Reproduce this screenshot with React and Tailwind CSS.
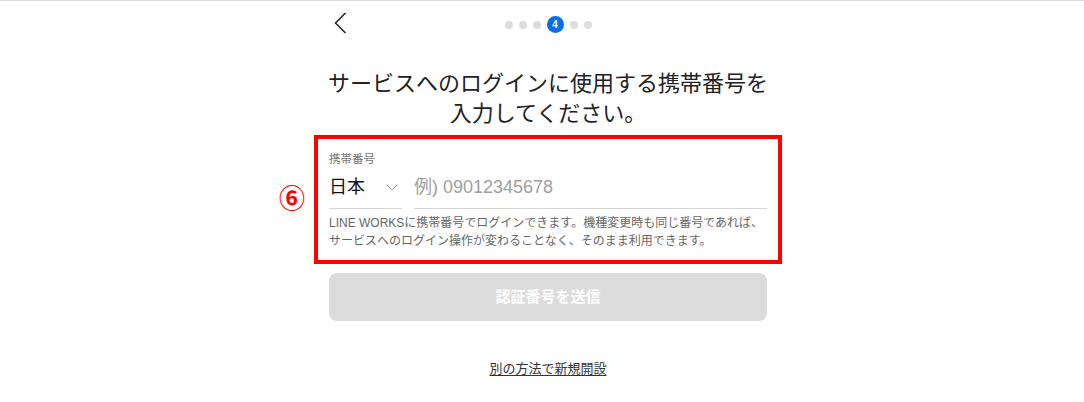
import React from 'react';

const dots = [1, 2, 3, 4, 5, 6];

function StepDots({ current }) {
  return (
    <div className="flex h-[17px] items-center gap-[6px]">
      {dots.map((n) =>
        n === current ? (
          <div
            key={n}
            className="flex h-[17px] w-[17px] items-center justify-center rounded-full bg-[#0b6cf2] text-[10px] font-bold leading-none text-white"
          >
            {n}
          </div>
        ) : (
          <div key={n} className="h-[8px] w-[8px] rounded-full bg-[#dddddd]" />
        )
      )}
    </div>
  );
}

export default function App() {
  return (
    <div className="min-h-[402px] border-t border-[#dcdcdc] bg-white pl-3 font-['Liberation_Sans','Noto_Sans_CJK_JP',sans-serif] text-[#222]">
      <div className="mx-auto w-[438px]">
        {/* Header */}
        <div className="grid h-[44px] grid-cols-[1fr_auto_1fr] items-start">
          <button className="mt-[11px] ml-[5px] w-fit">
            <svg width="13" height="22" viewBox="0 0 13 22" fill="none">
              <path d="M11.5 1 1.5 11l10 10" stroke="#222" strokeWidth="1.5" />
            </svg>
          </button>
          <div className="mt-[15px]">
            <StepDots current={4} />
          </div>
          <div />
        </div>

        {/* Title */}
        <h1 className="-mx-[20px] mt-[24px] text-center text-[22px] leading-[30px] font-normal whitespace-nowrap text-[#222]">
          サービスへのログインに使用する携帯番号を
          <br />
          入力してください。
        </h1>

        {/* Phone form (annotated) */}
        <div className="relative -mx-[15px] mt-[6px] border-4 border-[#ff0000] px-[11px] pt-[12px] pb-[10px]">
          <span className="absolute top-[47px] left-[-39px] w-[26px] text-center text-[26px] leading-[26px] font-bold text-[#ff0000]">
            ⑥
          </span>
          <div className="text-[11.5px] leading-[16px] text-[#777]">携帯番号</div>
          <div className="flex gap-[12px]">
            <div className="flex w-[73px] items-center justify-between border-b border-[#d6d6d6] pt-[8px] pr-[4px] pb-[9px]">
              <span className="text-[18px] leading-[24px] text-[#111]">日本</span>
              <svg width="12" height="7" viewBox="0 0 12 7" fill="none">
                <path d="M.5.5 6 6 11.5.5" stroke="#9a9a9a" strokeWidth="1" />
              </svg>
            </div>
            <div className="flex flex-1 items-center border-b border-[#d6d6d6] pt-[8px] pb-[9px]">
              <input
                className="w-full bg-transparent text-[18px] leading-[24px] text-[#111] outline-none placeholder:text-[#a0a0a0]"
                placeholder="例) 09012345678"
              />
            </div>
          </div>
          <p className="mt-[5px] text-[12px] leading-[18px] text-[#666]">
            LINE WORKSに携帯番号でログインできます。機種変更時も同じ番号であれば、
            <br />
            サービスへのログイン操作が変わることなく、そのまま利用できます。
          </p>
        </div>

        {/* Submit */}
        <button
          disabled
          className="mt-[9px] flex h-[48px] w-full items-center justify-center rounded-[8px] bg-[#dcdcdc] text-[15px] font-bold text-white"
        >
          認証番号を送信
        </button>

        {/* Other method */}
        <div className="mt-[38px] text-center text-[13px] leading-[20px]">
          <a href="#" className="text-[#333] underline underline-offset-2">
            別の方法で新規開設
          </a>
        </div>
      </div>
    </div>
  );
}
